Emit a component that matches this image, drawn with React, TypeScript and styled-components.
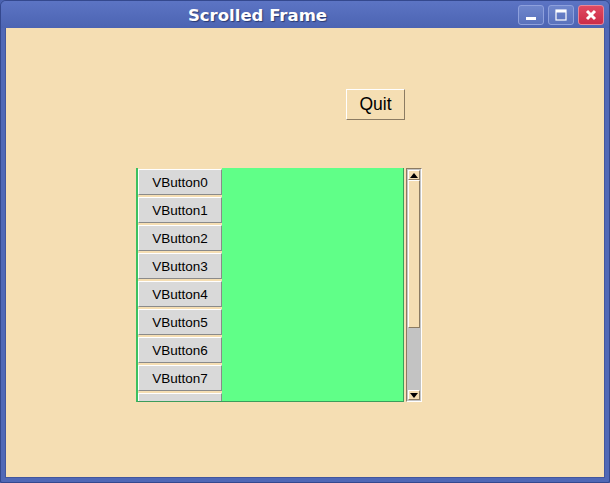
import styled, { createGlobalStyle } from 'styled-components'

const GlobalStyle = createGlobalStyle`
  html, body {
    margin: 0;
    padding: 0;
    background: #4a62b0;
  }
`

/* window chrome */
const Window = styled.div`
  width: 610px;
  height: 483px;
  box-sizing: border-box;
  background: #5068b6;
  border: 1px solid #34488e;
  border-radius: 6px 6px 2px 2px;
  display: flex;
  flex-direction: column;
  overflow: hidden;
`

const TitleBar = styled.div`
  height: 27px;
  display: flex;
  align-items: center;
  padding-right: 5px;
  background: linear-gradient(#5c74c4, #4c64b2);
`

const Title = styled.div`
  flex: 1;
  text-align: center;
  font-family: 'DejaVu Sans', sans-serif;
  font-weight: bold;
  font-size: 16.5px;
  color: #ffffff;
  text-shadow: 1px 1px 1px #2a3a70;
  padding-top: 1px;
`

const WinButton = styled.div<{ $close?: boolean }>`
  width: 26px;
  height: 20px;
  box-sizing: border-box;
  margin-left: 4px;
  border-radius: 3px;
  border: 1px solid ${({ $close }) => ($close ? '#e88898' : '#8ea0dc')};
  background: ${({ $close }) =>
    $close ? 'linear-gradient(#e04a62, #cc2c48)' : 'linear-gradient(#6f86cc, #5a72bc)'};
  display: flex;
  align-items: center;
  justify-content: center;
`

const Content = styled.div`
  flex: 1;
  margin: 0 4px 4px 4px;
  background: #f5deb3;
  border: 1px solid #42569e;
  border-top: none;
`

/* app area */
const QuitRow = styled.div`
  padding: 61px 0 0 340px;
`

const QuitButton = styled.button`
  width: 59px;
  height: 31px;
  box-sizing: border-box;
  background: #f5deb3;
  border: 1px solid;
  border-color: #ffffff #8b7b62 #8b7b62 #ffffff;
  font-family: 'Liberation Sans', Arial, sans-serif;
  font-size: 17.5px;
  color: #000;
  padding: 0;
`

const ScrollRow = styled.div`
  display: flex;
  gap: 2px;
  margin-top: 48px;
  padding-left: 130px;
`

const Canvas = styled.div`
  width: 268px;
  height: 234px;
  box-sizing: border-box;
  background: #60ff88;
  border-left: 2px solid #3cc060;
  border-right: 1px solid #3c9c5c;
  border-bottom: 1px solid #3c9c5c;
  overflow: hidden;
`

const ButtonColumn = styled.div`
  width: 84px;
  padding-top: 1px;
  background: #f5deb3;
  display: flex;
  flex-direction: column;
  gap: 2px;
`

const VButton = styled.div`
  height: 26px;
  box-sizing: border-box;
  background: #d9d9d9;
  border: 1px solid;
  border-color: #ffffff #8a8a8a #8a8a8a #ffffff;
  box-shadow: inset 0 0 0 0 transparent;
  display: flex;
  align-items: center;
  justify-content: center;
  font-family: 'Liberation Sans', Arial, sans-serif;
  font-size: 13.5px;
  color: #000;
`

const Scrollbar = styled.div`
  width: 16px;
  height: 234px;
  box-sizing: border-box;
  border: 1px solid;
  border-color: #8b7b62 #ffffff #ffffff #8b7b62;
  background: #c3c3c3;
  display: flex;
  flex-direction: column;
  padding: 1px;
`

const Arrow = styled.div`
  height: 10px;
  box-sizing: border-box;
  background: #f5deb3;
  border: 1px solid;
  border-color: #ffffff #8b7b62 #8b7b62 #ffffff;
  display: flex;
  align-items: center;
  justify-content: center;
`

const Slider = styled.div`
  height: 148px;
  box-sizing: border-box;
  background: #f5deb3;
  border: 1px solid;
  border-color: #ffffff #8b7b62 #8b7b62 #ffffff;
`

const Trough = styled.div`
  flex: 1;
`

const labels = Array.from({ length: 9 }, (_, i) => `VButton${i}`)

function App() {
  return (
    <>
      <GlobalStyle />
      <Window>
        <TitleBar>
          <Title>Scrolled Frame</Title>
          <WinButton>
            <svg width="12" height="12" viewBox="0 0 12 12">
              <rect x="1" y="8" width="10" height="3" fill="#fff" />
            </svg>
          </WinButton>
          <WinButton>
            <svg width="12" height="12" viewBox="0 0 12 12">
              <rect x="1" y="1" width="10" height="10" fill="none" stroke="#fff" strokeWidth="1.2" />
              <rect x="1" y="1" width="10" height="2.5" fill="#fff" />
            </svg>
          </WinButton>
          <WinButton $close>
            <svg width="12" height="12" viewBox="0 0 12 12">
              <path d="M2 2 L10 10 M10 2 L2 10" stroke="#fff" strokeWidth="3" />
            </svg>
          </WinButton>
        </TitleBar>
        <Content>
          <QuitRow>
            <QuitButton>Quit</QuitButton>
          </QuitRow>
          <ScrollRow>
            <Canvas>
              <ButtonColumn>
                {labels.map((l) => (
                  <VButton key={l}>{l}</VButton>
                ))}
              </ButtonColumn>
            </Canvas>
            <Scrollbar>
              <Arrow>
                <svg width="8" height="5" viewBox="0 0 8 5">
                  <path d="M0 5 L4 0 L8 5 Z" fill="#000" />
                </svg>
              </Arrow>
              <Slider />
              <Trough />
              <Arrow>
                <svg width="8" height="5" viewBox="0 0 8 5">
                  <path d="M0 0 L4 5 L8 0 Z" fill="#000" />
                </svg>
              </Arrow>
            </Scrollbar>
          </ScrollRow>
        </Content>
      </Window>
    </>
  )
}

export default App
